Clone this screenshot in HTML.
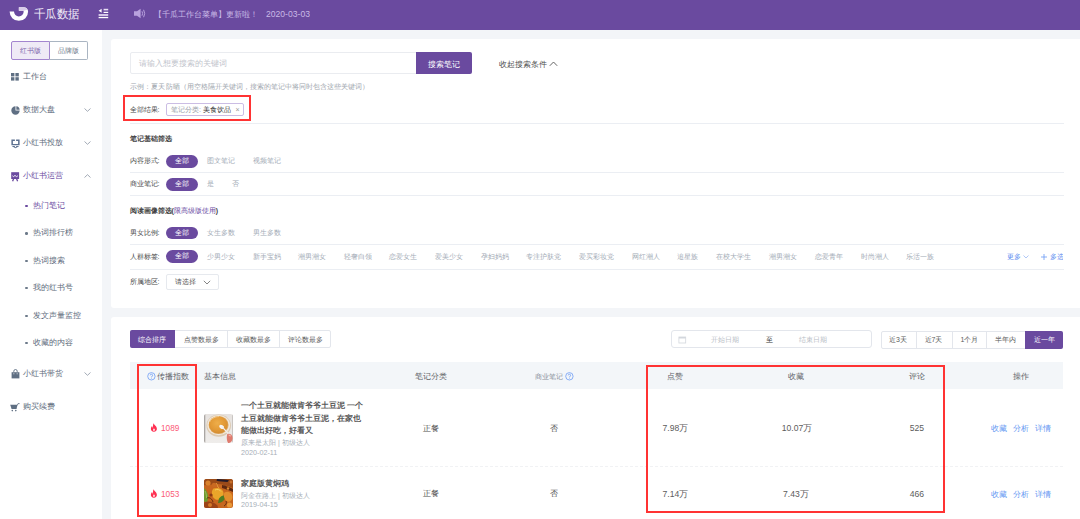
<!DOCTYPE html>
<html><head><meta charset="utf-8">
<style>
*{box-sizing:border-box;margin:0;padding:0}
html,body{width:1080px;height:519px;overflow:hidden;background:#f3f5f8;font-family:"Liberation Sans",sans-serif}
.a{position:absolute}
.t{position:absolute;white-space:nowrap;line-height:12px;height:12px}
.hdr{left:0;top:0;width:1080px;height:30px;background:#6a4a9f}
.side{left:0;top:30px;width:102px;height:489px;background:#fff}
.card{background:#fff;border-radius:3px}
.s8{font-size:8px}
.s7{font-size:7px}
.sb{color:#5d6a7b;font-size:8px}
.pill{position:absolute;background:#6a4a9f;border-radius:7px;color:#fff;font-size:7px;text-align:center}
.ft{color:#484848;font-size:7px}
.fo{color:#a3abb6;font-size:7px}
.hr{position:absolute;height:1px;background:#ebeef3}
.red{position:absolute;border:2px solid #ff3333}
.th{color:#5f6368;font-size:8px}
.td{color:#505050;font-size:8px}
.blue{color:#6396f2}
</style></head><body>

<!-- header -->
<div class="a hdr"></div>
<svg class="a" style="left:0;top:0" width="40" height="29" viewBox="0 0 40 29">
  <path d="M9.6 11.6 A9.25 9.25 0 0 0 28.1 11.6 C28.1 9.2 26.6 7.2 23.4 7.2 L18.85 7.2 L18.85 10.7 L21.8 10.7 C23 10.7 23.7 11.1 23.7 11.6 A4.85 4.85 0 0 1 14 11.6 Z" fill="#fff"/>
  <path d="M18.85 7.2 L23.4 7.2 C25.5 7.2 27 8.2 27.6 9.6 L23.2 10.9 C22.9 10.8 22.4 10.7 21.8 10.7 L18.85 10.7 Z" fill="#d9cbe9"/>
</svg>
<div class="t" style="left:33.5px;top:8.2px;font-size:11.5px;color:#f3eef9;transform:scaleX(0.95);transform-origin:0 0">千瓜数据</div>
<svg class="a" style="left:98px;top:8px" width="11" height="11" viewBox="0 0 11 11">
  <path d="M0.6 2.8 L3.6 0.8 L3.6 4.8 Z" fill="#fff"/>
  <rect x="5.6" y="0.8" width="4.6" height="1.6" fill="#e8def5"/>
  <rect x="5.6" y="3.8" width="4.6" height="1.2" fill="#fff"/>
  <rect x="0.6" y="6.1" width="9.6" height="1.8" fill="#e0d4f0"/>
  <rect x="0.6" y="8.9" width="9.6" height="1.3" fill="#fff"/>
</svg>
<svg class="a" style="left:133px;top:8px" width="14" height="11" viewBox="0 0 14 11">
  <path d="M1 3.3 L4 3.3 L7.6 0.8 L7.6 10.2 L4 7.7 L1 7.7 Z" fill="#b9a2de"/>
  <path d="M9 3.3 Q10.2 5.5 9 7.7" stroke="#b9a2de" stroke-width="1" fill="none"/>
  <path d="M10.6 1.8 Q12.8 5.5 10.6 9.2" stroke="#b9a2de" stroke-width="1" fill="none"/>
</svg>
<div class="t" style="left:153.5px;top:9px;font-size:8.2px;color:#c9b9e6">【千瓜工作台菜单】更新啦！</div>
<div class="t" style="left:266px;top:7.6px;font-size:9.2px;color:#c9b9e6;transform:scaleX(0.935);transform-origin:0 0">2020-03-03</div>

<!-- sidebar -->
<div class="a side"></div>
<div class="a" style="left:11px;top:41.3px;width:38.5px;height:18.3px;background:#efeaf6;border:1px solid #a385cf;border-radius:2px 0 0 2px"></div>
<div class="a" style="left:49.3px;top:41.3px;width:38.7px;height:18.3px;border:1px solid #aab5c2;border-left:none;border-radius:0 2px 2px 0"></div>
<div class="t" style="left:19.5px;top:44.5px;font-size:7px;color:#7a5fa9">红书版</div>
<div class="t" style="left:57.5px;top:44.5px;font-size:7px;color:#6a7585">品牌版</div>

<svg class="a" style="left:11px;top:73px" width="8" height="8" viewBox="0 0 8 8"><rect x="0" y="0" width="3.4" height="3.4" fill="#5f6f83"/><rect x="4.4" y="0" width="3.4" height="3.4" fill="#5f6f83"/><rect x="0" y="4.2" width="3.4" height="3.4" fill="#5f6f83"/><rect x="4.4" y="4.2" width="3.4" height="3.4" fill="#5f6f83"/></svg>
<div class="t sb" style="left:22.5px;top:70.5px">工作台</div>

<svg class="a" style="left:10.5px;top:105.5px" width="9" height="9" viewBox="0 0 9 9"><path d="M4.5 0.3 A4.2 4.2 0 1 0 8.7 4.5 L4.5 4.5 Z" fill="#5f6f83"/><path d="M5.3 0.3 A4 4 0 0 1 8.7 3.7 L5.3 3.7 Z" fill="#5f6f83"/></svg>
<div class="t sb" style="left:22.5px;top:103.8px">数据大盘</div>
<svg class="a" style="left:84px;top:107.5px" width="7" height="4" viewBox="0 0 7 4"><path d="M0.5 0.5 L3.5 3.3 L6.5 0.5" stroke="#8a94a3" stroke-width="0.8" fill="none"/></svg>

<svg class="a" style="left:10.5px;top:138.5px" width="9" height="10" viewBox="0 0 9 10"><path d="M0.4 0.4 H3.9 V1.9 H2.1 C1.9 1.9 1.9 2 1.9 2.2 V4.6 C1.9 4.8 2 4.9 2.2 4.9 H6.8 C7 4.9 7.1 4.8 7.1 4.6 V2.2 C7.1 2 7 1.9 6.8 1.9 H5.1 V0.4 H8.6 V6.3 H0.4 Z" fill="#5d7190"/><path d="M1 6.9 H3.9 V8 L4.5 8.3 L5.1 8 V6.9 H8 V7.3 L4.5 9.3 L1 7.3 Z" fill="#5d7190"/></svg>
<div class="t sb" style="left:22.5px;top:136.9px">小红书投放</div>
<svg class="a" style="left:84px;top:140.5px" width="7" height="4" viewBox="0 0 7 4"><path d="M0.5 0.5 L3.5 3.3 L6.5 0.5" stroke="#8a94a3" stroke-width="0.8" fill="none"/></svg>

<svg class="a" style="left:10.8px;top:171.8px" width="9" height="10" viewBox="0 0 9 10"><rect x="0.2" y="0.2" width="7.9" height="6.8" fill="#6a4a9f"/><path d="M2.6 6.8 L1.6 9.3 M5.6 6.8 L6.6 9.3" stroke="#6a4a9f" stroke-width="1.3"/><path d="M1.4 3.8 L2.6 4.6 L4 3.4 L5.4 4.6 L6.9 3.8" stroke="#fff" stroke-width="0.9" fill="none"/></svg>
<div class="t" style="left:22.5px;top:170px;font-size:8px;color:#6a4a9f">小红书运营</div>
<svg class="a" style="left:84px;top:174px" width="7" height="4" viewBox="0 0 7 4"><path d="M0.5 3.5 L3.5 0.7 L6.5 3.5" stroke="#8a94a3" stroke-width="0.8" fill="none"/></svg>

<div class="a" style="left:25.2px;top:204.5px;width:2.4px;height:2.4px;border-radius:50%;background:#6a4a9f"></div>
<div class="t" style="left:32.5px;top:199.5px;font-size:8px;color:#6a4a9f">热门笔记</div>
<div class="a" style="left:25.2px;top:232.3px;width:2.4px;height:2.4px;border-radius:50%;background:#6d7a8a"></div>
<div class="t sb" style="left:32.5px;top:227.3px">热词排行榜</div>
<div class="a" style="left:25.2px;top:260px;width:2.4px;height:2.4px;border-radius:50%;background:#6d7a8a"></div>
<div class="t sb" style="left:32.5px;top:255px">热词搜索</div>
<div class="a" style="left:25.2px;top:287px;width:2.4px;height:2.4px;border-radius:50%;background:#6d7a8a"></div>
<div class="t sb" style="left:32.5px;top:282px">我的红书号</div>
<div class="a" style="left:25.2px;top:314.5px;width:2.4px;height:2.4px;border-radius:50%;background:#6d7a8a"></div>
<div class="t sb" style="left:32.5px;top:309.5px">发文声量监控</div>
<div class="a" style="left:25.2px;top:342px;width:2.4px;height:2.4px;border-radius:50%;background:#6d7a8a"></div>
<div class="t sb" style="left:32.5px;top:337px">收藏的内容</div>

<svg class="a" style="left:10.5px;top:369px" width="9" height="10" viewBox="0 0 9 10"><path d="M2.8 3 L2.8 2.2 A1.7 1.7 0 0 1 6.2 2.2 L6.2 3" stroke="#5f6f83" stroke-width="0.9" fill="none"/><path d="M0.6 3.2 L8.4 3.2 L8.4 9.4 L0.6 9.4 Z" fill="#5f6f83"/><circle cx="2.9" cy="4.8" r="0.5" fill="#fff"/><circle cx="6.1" cy="4.8" r="0.5" fill="#fff"/></svg>
<div class="t sb" style="left:22.5px;top:367.8px">小红书带货</div>
<svg class="a" style="left:84px;top:371.5px" width="7" height="4" viewBox="0 0 7 4"><path d="M0.5 0.5 L3.5 3.3 L6.5 0.5" stroke="#8a94a3" stroke-width="0.8" fill="none"/></svg>

<svg class="a" style="left:10px;top:402.5px" width="10" height="9" viewBox="0 0 10 9"><path d="M0.2 1.8 L7.4 1.8 L6.6 6 L1.6 6 Z" fill="#5f6f83"/><path d="M7.2 2.4 L8 0.6 L9.6 0.6" stroke="#5f6f83" stroke-width="0.8" fill="none"/><circle cx="2.3" cy="7.6" r="0.8" fill="#5f6f83"/><circle cx="5.8" cy="7.6" r="0.8" fill="#5f6f83"/></svg>
<div class="t sb" style="left:22.5px;top:401px">购买续费</div>

<!-- card 1 -->
<div class="a card" style="left:111px;top:38.7px;width:990px;height:269px"></div>
<div class="a" style="left:129.5px;top:52.2px;width:287px;height:22.1px;border:1px solid #eaecf0;border-radius:2px 0 0 2px"></div>
<div class="t" style="left:139px;top:58px;font-size:8px;color:#bfc4cc">请输入想要搜索的关键词</div>
<div class="a" style="left:415.7px;top:52.4px;width:56.3px;height:21.9px;background:#6a4a9f;border-radius:0 2px 2px 0"></div>
<div class="t" style="left:427.5px;top:58.5px;font-size:8px;color:#fff">搜索笔记</div>
<div class="t" style="left:499px;top:58.5px;font-size:8px;color:#4d4d4d">收起搜索条件</div>
<svg class="a" style="left:549px;top:61px" width="9" height="6" viewBox="0 0 9 6"><path d="M0.8 4.8 L4.5 1 L8.2 4.8" stroke="#555" stroke-width="0.9" fill="none"/></svg>
<div class="t" style="left:129.5px;top:80.8px;font-size:6.7px;color:#a0a6ae">示例：夏天 防晒（用空格隔开关键词，搜索的笔记中将同时包含这些关键词）</div>

<div class="t ft" style="left:129.5px;top:104px">全部结果:</div>
<div class="a" style="left:165.5px;top:103.2px;width:78px;height:13.1px;border:1px solid #cbbde4;border-radius:2px"></div>
<div class="t" style="left:171px;top:103.8px;font-size:7px;color:#9aa0a8">笔记分类: <span style="color:#333">美食饮品</span></div>
<div class="t" style="left:235.5px;top:103.8px;font-size:7px;color:#999">×</div>
<div class="red" style="left:123px;top:95px;width:128px;height:25.7px"></div>
<div class="hr" style="left:129.5px;top:123px;width:934px"></div>

<div class="t" style="left:129.5px;top:132.7px;font-size:7px;color:#444;font-weight:bold">笔记基础筛选</div>

<div class="t ft" style="left:129.5px;top:154.8px">内容形式:</div>
<div class="pill" style="left:165.8px;top:155px;width:32px;height:12.5px;line-height:12.5px">全部</div>
<div class="t fo" style="left:207px;top:154.8px">图文笔记</div>
<div class="t fo" style="left:252.5px;top:154.8px">视频笔记</div>
<div class="hr" style="left:129.5px;top:172px;width:934px"></div>

<div class="t ft" style="left:129.5px;top:178.2px">商业笔记:</div>
<div class="pill" style="left:165.8px;top:178.3px;width:32px;height:12.5px;line-height:12.5px">全部</div>
<div class="t fo" style="left:206.5px;top:178.2px">是</div>
<div class="t fo" style="left:231.8px;top:178.2px">否</div>
<div class="hr" style="left:129.5px;top:195px;width:934px"></div>

<div class="t" style="left:129.5px;top:204.8px;font-size:7px;color:#444;font-weight:bold">阅读画像筛选(<span style="color:#6a4a9f;font-weight:normal">限高级版使用</span>)</div>

<div class="t ft" style="left:129.5px;top:226.8px">男女比例:</div>
<div class="pill" style="left:165.8px;top:227px;width:32px;height:12.2px;line-height:12.2px">全部</div>
<div class="t fo" style="left:207px;top:226.8px">女生多数</div>
<div class="t fo" style="left:252.5px;top:226.8px">男生多数</div>
<div class="hr" style="left:129.5px;top:243.8px;width:934px"></div>

<div class="t ft" style="left:129.5px;top:251.2px">人群标签:</div>
<div class="pill" style="left:165.8px;top:250px;width:32px;height:12.8px;line-height:12.8px">全部</div>
<div class="a" style="left:0;top:0;width:1063px;height:519px;overflow:hidden">
<div class="t fo" style="left:207px;top:251.2px">少男少女</div>
<div class="t fo" style="left:252.5px;top:251.2px">新手宝妈</div>
<div class="t fo" style="left:297.6px;top:251.2px">潮男潮女</div>
<div class="t fo" style="left:343.5px;top:251.2px">轻奢白领</div>
<div class="t fo" style="left:389.4px;top:251.2px">恋爱女生</div>
<div class="t fo" style="left:435px;top:251.2px">爱美少女</div>
<div class="t fo" style="left:481px;top:251.2px">孕妇妈妈</div>
<div class="t fo" style="left:526.4px;top:251.2px">专注护肤党</div>
<div class="t fo" style="left:579.1px;top:251.2px">爱买彩妆党</div>
<div class="t fo" style="left:631.5px;top:251.2px">网红潮人</div>
<div class="t fo" style="left:677.4px;top:251.2px">追星族</div>
<div class="t fo" style="left:716.3px;top:251.2px">在校大学生</div>
<div class="t fo" style="left:769px;top:251.2px">潮男潮女</div>
<div class="t fo" style="left:814.5px;top:251.2px">恋爱青年</div>
<div class="t fo" style="left:860.5px;top:251.2px">时尚潮人</div>
<div class="t fo" style="left:905.8px;top:251.2px">乐活一族</div>
<div class="t" style="left:1006.8px;top:251.2px;font-size:7px;color:#5b8df0">更多</div>
<svg class="a" style="left:1022.8px;top:254.8px" width="6" height="4" viewBox="0 0 6 4"><path d="M0.5 0.5 L3 3 L5.5 0.5" stroke="#8fb0f3" stroke-width="0.7" fill="none"/></svg>
<svg class="a" style="left:1041.3px;top:253.6px" width="6" height="6" viewBox="0 0 6 6"><path d="M3 0 V6 M0 3 H6" stroke="#6a9bf5" stroke-width="0.8"/></svg><div class="t" style="left:1050px;top:251.2px;font-size:7px;color:#5b8df0">多选</div>
</div>
<div class="hr" style="left:129.5px;top:269px;width:934px"></div>

<div class="t ft" style="left:129.5px;top:276px">所属地区:</div>
<div class="a" style="left:165.7px;top:273.9px;width:53.8px;height:16.1px;border:1px solid #e6e9ee;border-radius:2px"></div>
<div class="t" style="left:174.5px;top:276px;font-size:7px;color:#555">请选择</div>
<svg class="a" style="left:202.5px;top:280px" width="8" height="5" viewBox="0 0 8 5"><path d="M0.8 0.8 L4 4 L7.2 0.8" stroke="#666" stroke-width="0.8" fill="none"/></svg>

<!-- card 2 -->
<div class="a card" style="left:111px;top:316.5px;width:990px;height:220px"></div>
<div class="a" style="left:129.8px;top:330.2px;width:201.5px;height:18.3px;border:1px solid #e3e6ec;border-radius:2px"></div>
<div class="a" style="left:129.8px;top:330.2px;width:45.2px;height:18.3px;background:#6a4a9f;border-radius:2px 0 0 2px"></div>
<div class="a" style="left:227px;top:330.2px;width:1px;height:18.3px;background:#e3e6ec"></div>
<div class="a" style="left:279px;top:330.2px;width:1px;height:18.3px;background:#e3e6ec"></div>
<div class="t" style="left:138px;top:333.5px;font-size:7px;color:#fff">综合排序</div>
<div class="t" style="left:184.2px;top:333.5px;font-size:7px;color:#5a5a5a">点赞数最多</div>
<div class="t" style="left:236px;top:333.5px;font-size:7px;color:#5a5a5a">收藏数最多</div>
<div class="t" style="left:288px;top:333.5px;font-size:7px;color:#5a5a5a">评论数最多</div>

<div class="a" style="left:671.2px;top:330.2px;width:200.7px;height:18.3px;border:1px solid #e3e6ec;border-radius:3px"></div>
<svg class="a" style="left:678px;top:335.5px" width="9" height="8" viewBox="0 0 9 8"><rect x="0.9" y="1" width="6.8" height="6" fill="none" stroke="#d3d7dd" stroke-width="0.8"/><rect x="0.9" y="1" width="6.8" height="1.5" fill="#d3d7dd"/></svg>
<div class="t" style="left:710.5px;top:333.5px;font-size:7.4px;color:#b9bec6">开始日期</div>
<div class="t" style="left:765.5px;top:333.5px;font-size:7px;color:#333">至</div>
<div class="t" style="left:798.8px;top:333.5px;font-size:7.4px;color:#b9bec6">结束日期</div>

<div class="a" style="left:880.7px;top:331.2px;width:182.4px;height:17.6px;border:1px solid #e3e6ec;border-radius:2px"></div>
<div class="a" style="left:916px;top:331.2px;width:1px;height:17.6px;background:#e3e6ec"></div>
<div class="a" style="left:951.5px;top:331.2px;width:1px;height:17.6px;background:#e3e6ec"></div>
<div class="a" style="left:986px;top:331.2px;width:1px;height:17.6px;background:#e3e6ec"></div>
<div class="a" style="left:1025px;top:331.2px;width:38.1px;height:17.6px;background:#6a4a9f;border-radius:0 2px 2px 0"></div>
<div class="t" style="left:889px;top:334px;font-size:7px;color:#5a5a5a">近3天</div>
<div class="t" style="left:924.5px;top:334px;font-size:7px;color:#5a5a5a">近7天</div>
<div class="t" style="left:960.5px;top:334px;font-size:7px;color:#5a5a5a">1个月</div>
<div class="t" style="left:994.5px;top:334px;font-size:7px;color:#5a5a5a">半年内</div>
<div class="t" style="left:1033.5px;top:334px;font-size:7px;color:#fff">近一年</div>

<!-- table -->
<div class="a" style="left:130px;top:362.3px;width:933px;height:26.4px;background:#f3f6f9"></div>
<svg class="a" style="left:146.5px;top:371.8px" width="9" height="9" viewBox="0 0 9 9"><circle cx="4.4" cy="4.3" r="3.7" fill="none" stroke="#6f9df5" stroke-width="0.8"/><path d="M3.2 3.4 A1.2 1.2 0 1 1 4.6 4.6 L4.4 5.4" stroke="#6f9df5" stroke-width="0.8" fill="none"/><circle cx="4.4" cy="6.4" r="0.45" fill="#6f9df5"/></svg>
<div class="t th" style="left:156.8px;top:371px">传播指数</div>
<div class="t th" style="left:204px;top:371px">基本信息</div>
<div class="t th" style="left:414.8px;top:371px">笔记分类</div>
<div class="t" style="left:534.5px;top:371.3px;font-size:7px;color:#8a9099">商业笔记</div>
<svg class="a" style="left:564.5px;top:371.5px" width="9" height="9" viewBox="0 0 9 9"><circle cx="4.4" cy="4.3" r="3.7" fill="none" stroke="#6f9df5" stroke-width="0.8"/><path d="M3.2 3.4 A1.2 1.2 0 1 1 4.6 4.6 L4.4 5.4" stroke="#6f9df5" stroke-width="0.8" fill="none"/><circle cx="4.4" cy="6.4" r="0.45" fill="#6f9df5"/></svg>
<div class="t th" style="left:667px;top:371px">点赞</div>
<div class="t th" style="left:788px;top:371px">收藏</div>
<div class="t th" style="left:909.3px;top:371px">评论</div>
<div class="t th" style="left:1012.6px;top:371px">操作</div>

<!-- row 1 -->
<svg class="a" style="left:150px;top:423px" width="8" height="9" viewBox="0 0 8 9"><path d="M3.6 0.3 C4.2 2 6.2 3 6.8 5 C7.4 7.4 5.7 8.7 3.9 8.7 C2 8.7 0.6 7.4 0.9 5.3 C1.1 4.2 1.8 3.4 2.2 3.1 C2.2 4 2.6 4.6 3.1 4.8 C2.9 3.1 3 1.6 3.6 0.3 Z M3.9 5.3 C3.3 6.2 3 6.8 3.1 7.4 C3.3 8 4.6 8 4.8 7.3 C5 6.7 4.5 6 3.9 5.3 Z" fill="#ff3052" fill-rule="evenodd"/></svg>
<div class="t" style="left:160.7px;top:421.9px;font-size:9.4px;color:#fb5b78;transform:scaleX(0.88);transform-origin:0 0">1089</div>
<svg class="a" style="left:204px;top:413.8px" width="29" height="29" viewBox="0 0 29 29">
  <defs><clipPath id="c1"><rect x="0" y="0" width="29" height="29" rx="2.5"/></clipPath>
  <radialGradient id="g1" cx="0.45" cy="0.4" r="0.65"><stop offset="0" stop-color="#eeae4a"/><stop offset="0.6" stop-color="#e39a36"/><stop offset="1" stop-color="#cf8a34"/></radialGradient>
  <linearGradient id="bg1" x1="0" y1="0" x2="0" y2="1"><stop offset="0" stop-color="#e6e2df"/><stop offset="1" stop-color="#efedeb"/></linearGradient></defs>
  <g clip-path="url(#c1)">
  <rect width="29" height="29" fill="url(#bg1)"/>
  <rect x="0" y="0" width="1.3" height="29" fill="#aaa6a3"/>
  <rect x="28" y="0" width="1" height="29" fill="#c9c5c2"/>
  <ellipse cx="14.7" cy="11.6" rx="12.3" ry="11.2" fill="#dccab2"/>
  <ellipse cx="14.7" cy="11.1" rx="11.4" ry="10.2" fill="#f1e7da"/>
  <ellipse cx="14.6" cy="11" rx="10" ry="9.1" fill="#e0b070"/>
  <ellipse cx="14.4" cy="10.8" rx="9.4" ry="8.6" fill="url(#g1)"/>
  <path d="M5.6 8 C7.5 4 12 2.6 15 2.6" stroke="#f6d9a8" stroke-width="0.7" fill="none"/>
  <ellipse cx="17.6" cy="12.9" rx="2.6" ry="1.8" transform="rotate(30 17.6 12.9)" fill="#f7f5f3"/>
  <path d="M18.8 13.6 L25.8 21.2" stroke="#f1efed" stroke-width="1.3" stroke-linecap="round"/>
  <path d="M23.4 20 C25.5 19 28.6 20.5 28.6 24 C28.6 27.5 26 29.5 24.2 28.9 C22.6 28.2 22.4 21.5 23.4 20 Z" fill="#df7b6e"/>
  <path d="M24.3 20.8 C25.6 20.3 27 21 27.1 22.3 C26 22.6 24.8 22 24.3 20.8 Z" fill="#f2b7a8"/>
  </g>
</svg>
<div class="t" style="left:241px;top:399.5px;font-size:8px;color:#585858;font-weight:bold">一个土豆就能做肯爷爷土豆泥 一个</div>
<div class="t" style="left:241px;top:412.9px;font-size:8px;color:#585858;font-weight:bold">土豆就能做肯爷爷土豆泥，在家也</div>
<div class="t" style="left:241px;top:425.2px;font-size:8px;color:#585858;font-weight:bold">能做出好吃，好看又</div>
<div class="t" style="left:241px;top:437.2px;font-size:7px;color:#a8afb8">原来是太阳 | 初级达人</div>
<div class="t" style="left:241px;top:447px;font-size:7.2px;color:#a8afb8">2020-02-11</div>
<div class="t td" style="left:423px;top:423px">正餐</div>
<div class="t td" style="left:549.5px;top:423px">否</div>
<div class="t td" style="left:662.5px;top:422.2px;font-size:8.6px;color:#5c5c5c">7.98万</div>
<div class="t td" style="left:781.7px;top:422.2px;font-size:8.6px;color:#5c5c5c">10.07万</div>
<div class="t td" style="left:909.8px;top:422.2px;font-size:8.6px;color:#5c5c5c">525</div>
<div class="t blue" style="left:991px;top:423px;font-size:8px">收藏</div><div class="t blue" style="left:1012.6px;top:423px;font-size:8px">分析</div><div class="t blue" style="left:1034.7px;top:423px;font-size:8px">详情</div>

<div class="a" style="left:130px;top:466.3px;width:933px;height:0;border-top:1px dashed #f1f2f4"></div>

<!-- row 2 -->
<svg class="a" style="left:150px;top:488.8px" width="8" height="9" viewBox="0 0 8 9"><path d="M3.6 0.3 C4.2 2 6.2 3 6.8 5 C7.4 7.4 5.7 8.7 3.9 8.7 C2 8.7 0.6 7.4 0.9 5.3 C1.1 4.2 1.8 3.4 2.2 3.1 C2.2 4 2.6 4.6 3.1 4.8 C2.9 3.1 3 1.6 3.6 0.3 Z M3.9 5.3 C3.3 6.2 3 6.8 3.1 7.4 C3.3 8 4.6 8 4.8 7.3 C5 6.7 4.5 6 3.9 5.3 Z" fill="#ff3052" fill-rule="evenodd"/></svg>
<div class="t" style="left:160.7px;top:487.5px;font-size:9.4px;color:#fb5b78;transform:scaleX(0.88);transform-origin:0 0">1053</div>
<svg class="a" style="left:204px;top:479.2px" width="29" height="29" viewBox="0 0 29 29">
  <defs><clipPath id="c2"><rect x="0" y="0" width="29" height="29" rx="2.5"/></clipPath></defs>
  <g clip-path="url(#c2)">
  <rect width="29" height="29" fill="#c8661e"/>
  <path d="M0 0 H29 V9 C24 7 19 5 12 5 C7 5 3 7 0 6 Z" fill="#9a4a18"/>
  <path d="M13 0 C17 0.6 21 0.4 25 1.2 L23.5 3 C19.5 2.6 16 2.4 12.5 1.8 Z" fill="#231a2a"/>
  <circle cx="4" cy="4" r="2.6" fill="#d9812c"/>
  <circle cx="10" cy="6" r="2.2" fill="#c96a22"/>
  <circle cx="21" cy="5" r="2" fill="#9a4a1c"/>
  <path d="M18 6 C22 7 26 8 29 10 V13 C25 11 21 10 18 9 Z" fill="#5e2810"/>
  <path d="M0 9 C2.5 11 4.2 14.5 4.4 19 L3 23.5 L0 22.5 Z" fill="#6f9a30"/>
  <path d="M1 12 C2 14 2.6 16 2.5 19" stroke="#b8d27a" stroke-width="0.6" fill="none"/>
  <path d="M9.5 9.5 C14.5 7.8 20.5 10 19.4 15.8 C18.6 20 14.6 22 11.2 20.2 C8.2 18.4 6.4 12.6 9.5 9.5 Z" fill="#eaa52a"/>
  <path d="M11 11 C13 10 16 10.5 17 12.5" stroke="#f7cc62" stroke-width="1" fill="none"/>
  <path d="M15 19.5 C17.6 15.5 21.8 15.6 21.2 18.6 C20.6 21.4 17 24.4 14 24 Z" fill="#4f7d22"/>
  <path d="M20.5 13.5 C24.5 11.5 28.6 13.8 28.4 18.6 C28.2 22.6 24.2 23.8 22.2 21.8 C20.2 19.8 19 16 20.5 13.5 Z" fill="#e38f2c"/>
  <path d="M0 23.5 C5 21.5 9.5 23 13.5 26.5 L14 29 H0 Z" fill="#9c4418"/>
  <circle cx="6" cy="26" r="2" fill="#d47a2a"/>
  <circle cx="19" cy="26.5" r="2.3" fill="#c56a22"/>
  <circle cx="25.5" cy="26" r="2.6" fill="#e89838"/>
  <circle cx="7" cy="16" r="1.6" fill="#8a3a16"/>
  <circle cx="24" cy="9.5" r="1.2" fill="#e08a30"/>
  <path d="M3 19 C6 18 8 20 9 23" stroke="#6a2c10" stroke-width="1" fill="none"/>
  <path d="M12 4 C14 6 13 8 15 9" stroke="#e39a3c" stroke-width="1" fill="none"/>
  <path d="M22 22 C23 24 22 26 20 27" stroke="#5a2a10" stroke-width="0.9" fill="none"/>
  <circle cx="27" cy="3" r="1.5" fill="#c9702a"/>
  </g>
</svg>
<div class="t" style="left:241px;top:477.9px;font-size:8px;color:#585858;font-weight:bold">家庭版黄焖鸡</div>
<div class="t" style="left:241px;top:489.5px;font-size:7px;color:#a8afb8">阿金在路上 | 初级达人</div>
<div class="t" style="left:241px;top:499.2px;font-size:7.2px;color:#a8afb8">2019-04-15</div>
<div class="t td" style="left:423px;top:488.3px">正餐</div>
<div class="t td" style="left:549.5px;top:488.3px">否</div>
<div class="t td" style="left:662.5px;top:487.6px;font-size:8.6px;color:#5c5c5c">7.14万</div>
<div class="t td" style="left:783px;top:487.6px;font-size:8.6px;color:#5c5c5c">7.43万</div>
<div class="t td" style="left:909.8px;top:487.6px;font-size:8.6px;color:#5c5c5c">466</div>
<div class="t blue" style="left:991px;top:488.5px;font-size:8px">收藏</div><div class="t blue" style="left:1012.6px;top:488.5px;font-size:8px">分析</div><div class="t blue" style="left:1034.7px;top:488.5px;font-size:8px">详情</div>

<div class="red" style="left:136.5px;top:363.5px;width:60.5px;height:153.2px"></div>
<div class="red" style="left:646px;top:365px;width:299px;height:148px"></div>

</body></html>
